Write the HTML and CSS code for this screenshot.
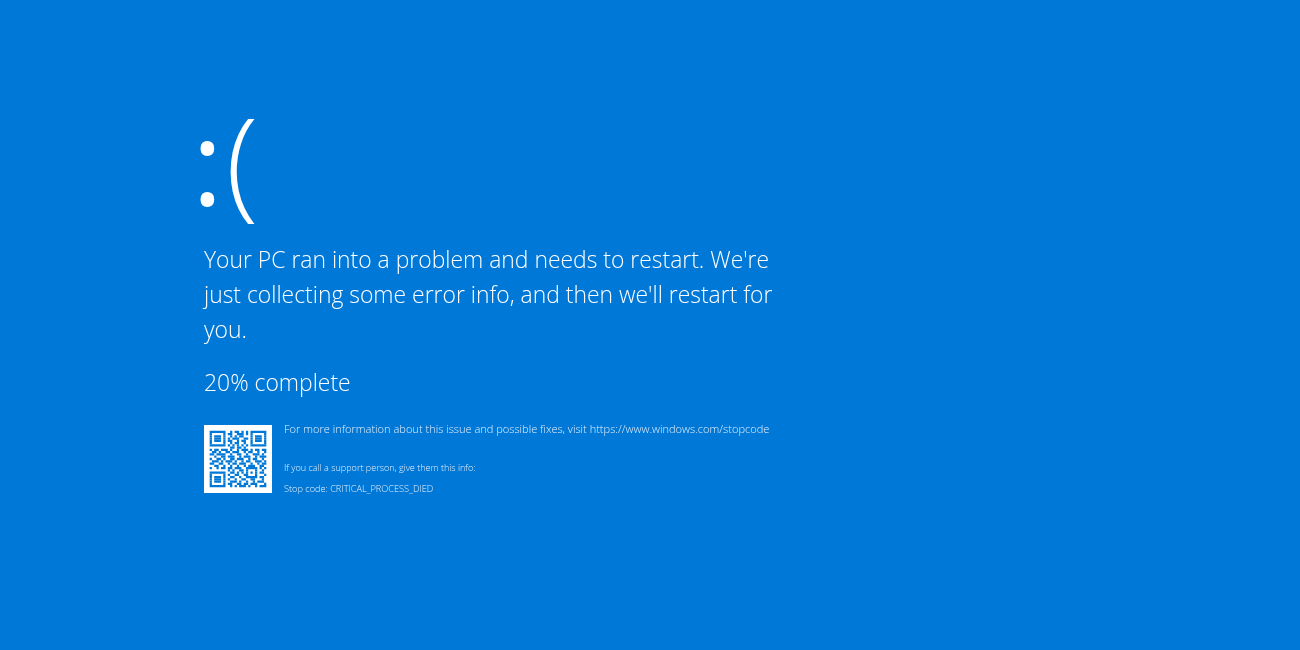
FILE: index.html
```html
<!DOCTYPE html>
<html>
<head>
    <title>Stop code</title>
    <link rel="stylesheet" href="styles.css">
</head>
<body>
    <div class="screen">
        <div class="face"><span class="eyes">:</span><span class="mouth">(</span></div>

        <p class="message">Your PC ran into a problem and needs to restart. We're<br>just collecting some error info, and then we'll restart for<br>you.</p>
        <p class="progress">20% complete</p>

        <div class="details">
            <div class="qr">
                <svg width="68" height="68" viewBox="0 0 30 30">
                    <g transform="translate(2.5 2.5)" fill="none" stroke="#0078d7" stroke-width="1">
                        <path d="M0 .5h7M9 .5h1M11 .5h2M14 .5h1M16 .5h1M18 .5h7"/>
                        <path d="M0 1.5h1M6 1.5h1M8 1.5h2M12 1.5h3M16 1.5h1M18 1.5h1M24 1.5h1"/>
                        <path d="M0 2.5h1M2 2.5h3M6 2.5h1M9 2.5h1M11 2.5h1M13 2.5h2M18 2.5h1M20 2.5h3M24 2.5h1"/>
                        <path d="M0 3.5h1M2 3.5h3M6 3.5h1M8 3.5h1M10 3.5h3M15 3.5h2M18 3.5h1M20 3.5h3M24 3.5h1"/>
                        <path d="M0 4.5h1M2 4.5h3M6 4.5h1M8 4.5h2M12 4.5h1M14 4.5h2M18 4.5h1M20 4.5h3M24 4.5h1"/>
                        <path d="M0 5.5h1M6 5.5h1M9 5.5h1M11 5.5h2M15 5.5h1M18 5.5h1M24 5.5h1"/>
                        <path d="M0 6.5h7M8 6.5h1M10 6.5h1M12 6.5h1M14 6.5h1M16 6.5h1M18 6.5h7"/>
                        <path d="M9 7.5h2M12 7.5h2M15 7.5h1"/>
                        <path d="M0 8.5h1M2 8.5h2M5 8.5h3M9 8.5h1M12 8.5h1M14 8.5h3M18 8.5h1M20 8.5h2M23 8.5h2"/>
                        <path d="M1 9.5h2M4 9.5h1M7 9.5h2M10 9.5h3M15 9.5h1M17 9.5h2M21 9.5h1M24 9.5h1"/>
                        <path d="M0 10.5h2M3 10.5h3M6 10.5h1M9 10.5h1M12 10.5h2M16 10.5h1M19 10.5h3M23 10.5h1"/>
                        <path d="M2 11.5h1M5 11.5h2M8 11.5h3M13 11.5h1M15 11.5h3M20 11.5h1M22 11.5h3"/>
                        <path d="M0 12.5h1M3 12.5h2M6 12.5h1M9 12.5h2M12 12.5h3M17 12.5h1M19 12.5h2M23 12.5h1"/>
                        <path d="M1 13.5h3M5 13.5h1M7 13.5h3M11 13.5h1M14 13.5h1M16 13.5h2M20 13.5h3M24 13.5h1"/>
                        <path d="M0 14.5h2M4 14.5h2M8 14.5h1M10 14.5h2M13 14.5h3M18 14.5h1M21 14.5h1M23 14.5h2"/>
                        <path d="M2 15.5h2M6 15.5h1M9 15.5h1M12 15.5h1M15 15.5h1M17 15.5h3M22 15.5h2"/>
                        <path d="M0 16.5h1M3 16.5h1M5 16.5h2M8 16.5h2M11 16.5h3M16 16.5h5M22 16.5h1M24 16.5h1"/>
                        <path d="M8 17.5h1M10 17.5h1M13 17.5h2M16 17.5h1M20 17.5h1M23 17.5h1"/>
                        <path d="M0 18.5h7M9 18.5h2M12 18.5h1M14 18.5h1M16 18.5h1M18 18.5h1M20 18.5h1M22 18.5h2"/>
                        <path d="M0 19.5h1M6 19.5h1M8 19.5h1M11 19.5h2M15 19.5h1M16 19.5h1M20 19.5h1M24 19.5h1"/>
                        <path d="M0 20.5h1M2 20.5h3M6 20.5h1M9 20.5h2M13 20.5h1M16 20.5h5M22 20.5h2"/>
                        <path d="M0 21.5h1M2 21.5h3M6 21.5h1M8 21.5h1M11 21.5h1M14 21.5h2M18 21.5h2M23 21.5h1"/>
                        <path d="M0 22.5h1M2 22.5h3M6 22.5h1M9 22.5h3M13 22.5h1M16 22.5h1M19 22.5h1M21 22.5h3"/>
                        <path d="M0 23.5h1M6 23.5h1M8 23.5h2M12 23.5h2M15 23.5h2M18 23.5h3M24 23.5h1"/>
                        <path d="M0 24.5h7M9 24.5h1M11 24.5h1M13 24.5h3M17 24.5h1M20 24.5h1M22 24.5h3"/>
                    </g>
                </svg>
            </div>
            <div class="info">
                <p class="more">For more information about this issue and possible fixes, visit https://www.windows.com/stopcode</p>
                <p class="support">If you call a support person, give them this info:</p>
                <p class="code">Stop code: CRITICAL_PROCESS_DIED</p>
            </div>
        </div>
    </div>
</body>
</html>
```

FILE: styles.css
```css
html, body { margin: 0; height: 100%; }
body { background: #0078d7; color: #fff; font-family: "Open Sans", sans-serif; font-weight: 300; overflow: hidden; }
p { margin: 0; }

.screen { padding: 96px 0 0 200px; filter: blur(0.7px); }

.face { display: flex; align-items: center; height: 140px; line-height: 140px; margin-left: -8px; }
.eyes { font-size: 117px; font-weight: 400; margin-top: -12px; margin-right: 3px; }
.mouth { font-size: 120px; margin-top: -14px; }

.message { margin: 6px 0 0 4px; font-size: 22.9px; line-height: 35px; }
.progress { margin: 18px 0 0 4px; font-size: 22.9px; line-height: 35px; }

.details { display: flex; gap: 12px; margin: 25px 0 0 4px; }
.qr { width: 68px; height: 68px; background: #fff; }
.qr svg { display: block; }

.info { color: #e3f0fb; }
.more { font-size: 11.05px; line-height: 14px; margin-top: -3px; margin-bottom: 26px; }
.support { font-size: 9.07px; line-height: 12px; margin-bottom: 9px; }
.code { font-size: 9.2px; line-height: 12px; }
```
